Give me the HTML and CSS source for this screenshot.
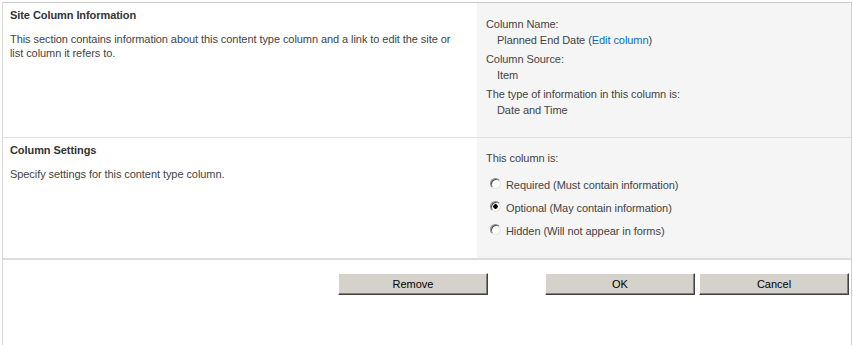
FILE: index.html
```html
<!DOCTYPE html>
<html lang="en">
<head>
    <meta charset="UTF-8">
    <title>Content Type Column</title>
    <link rel="stylesheet" href="styles.css">
</head>
<body>
    <div class="form">
        <div class="section">
            <div class="section-info">
                <h3>Site Column Information</h3>
                <p>This section contains information about this content type column and a link to edit the site or list column it refers to.</p>
            </div>
            <div class="section-body">
                <div class="field">
                    <div class="label">Column Name:</div>
                    <div class="value">Planned End Date (<a href="#">Edit column</a>)</div>
                </div>
                <div class="field">
                    <div class="label">Column Source:</div>
                    <div class="value">Item</div>
                </div>
                <div class="field">
                    <div class="label">The type of information in this column is:</div>
                    <div class="value">Date and Time</div>
                </div>
            </div>
        </div>

        <div class="section last">
            <div class="section-info">
                <h3>Column Settings</h3>
                <p>Specify settings for this content type column.</p>
            </div>
            <div class="section-body">
                <div class="label">This column is:</div>
                <div class="radios">
                    <label class="radio"><input type="radio" name="status"> Required (Must contain information)</label>
                    <label class="radio"><input type="radio" name="status" checked> Optional (May contain information)</label>
                    <label class="radio"><input type="radio" name="status"> Hidden (Will not appear in forms)</label>
                </div>
            </div>
        </div>

        <div class="actions">
            <button class="btn remove">Remove</button>
            <button class="btn">OK</button>
            <button class="btn">Cancel</button>
        </div>
    </div>
</body>
</html>
```

FILE: styles.css
```css
* {
    box-sizing: border-box;
}

body {
    margin: 0;
    background: white;
    font-family: 'Liberation Sans', Arial, sans-serif;
    font-size: 11px;
    letter-spacing: -0.07px;
    color: #444;
}

.form {
    margin: 2px 0 0 2px;
    width: 850px;
    height: 343px;
    border-top: 1px solid #c9c9c9;
    border-left: 1px solid #dadada;
    border-right: 1px solid #d0d0d0;
}

.section {
    display: grid;
    grid-template-columns: 474px 1fr;
    height: 135px;
    border-bottom: 1px solid #e0e0e0;
}

.section.last {
    height: 122px;
    border-bottom: 2px solid #dcdcdc;
}

.section-info {
    padding: 6px 10px 0 7px;
}

.section-info h3 {
    margin: 0;
    font-size: 11px;
    line-height: 13px;
    font-weight: bold;
    color: #333;
}

.section-info p {
    margin: 10px 0 0;
    line-height: 14px;
    width: 452px;
}

.section-body {
    background: #f5f5f5;
    padding: 13px 0 0 9px;
}

.field {
    margin-bottom: 3px;
}

.label {
    line-height: 16px;
}

.value {
    line-height: 16px;
    padding-left: 11px;
}

.value a {
    color: #0072bc;
    text-decoration: none;
}

.section.last .section-body {
    padding-top: 12px;
}

.radios {
    margin-top: 11px;
    display: flex;
    flex-direction: column;
    gap: 7px;
}

.radio {
    display: flex;
    align-items: center;
    gap: 5px;
    line-height: 16px;
    padding-left: 4px;
}

.radio input {
    appearance: none;
    margin: 0;
    width: 11px;
    height: 11px;
    border-radius: 50%;
    border: 1px solid;
    border-color: #8a8a8a #e4e4e4 #e4e4e4 #8a8a8a;
    box-shadow: inset 1px 1px 0 #505050;
    background: white;
    position: relative;
    top: -2px;
}

.radio input:checked {
    background: radial-gradient(circle, #000 0 2px, white 2.5px);
}

.actions {
    display: flex;
    justify-content: flex-end;
    padding: 13px 2px 0 0;
}

.btn {
    width: 150px;
    height: 22px;
    margin-left: 4px;
    font-family: 'Liberation Sans', Arial, sans-serif;
    font-size: 11px;
    color: #000;
    background: #d4d2ca;
    border: 1px solid;
    border-color: #fff #404040 #404040 #fff;
    box-shadow: inset -1px -1px 0 #808080;
    padding: 0;
}

.btn.remove {
    margin-right: 53px;
}
```
